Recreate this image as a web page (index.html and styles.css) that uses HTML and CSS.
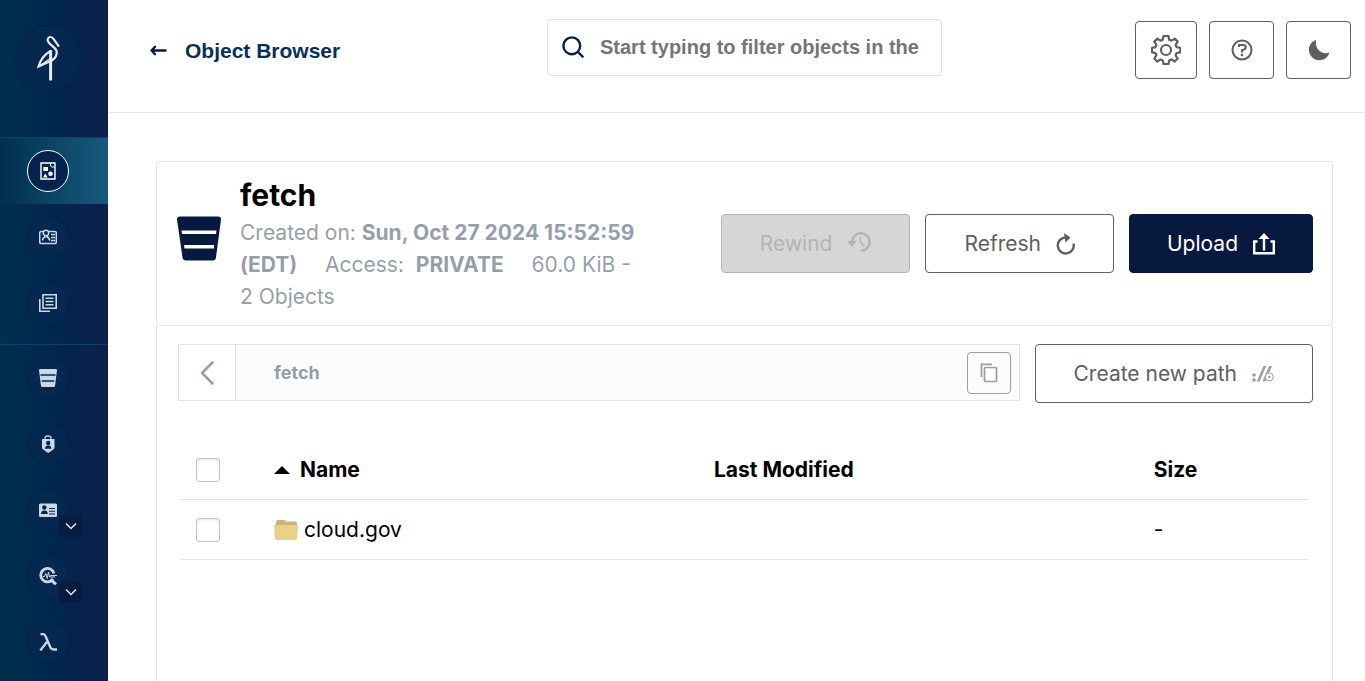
FILE: index.html
```html
<!DOCTYPE html>
<html lang="en">
<head>
<meta charset="utf-8">
<meta name="viewport" content="width=device-width, initial-scale=1">
<title>Object Browser</title>
<link rel="stylesheet" href="styles.css">
</head>
<body>
<div class="app">
  <nav class="sidebar" aria-label="Main">
    <a class="logo" href="#" aria-label="Home">
      <svg width="24" height="48" viewBox="0 0 24 48" fill="none" stroke="#e8e9ec">
        <path d="M23 12.700L17.500 5C16 2.300 12.500 2.400 11.700 5C11.100 7.300 12.500 8.700 15 10.800C19 14.200 21.300 16 20.700 19.500C20 24 17 26.500 12.500 28L2.500 32.500C4.500 25.500 8.500 20.500 14.500 17" stroke-width="2.200"/>
        <path d="M14.600 16V46.500" stroke-width="3"/>
        <path d="M3.500 32L13.500 25" stroke-width="1.500"/>
      </svg>
    </a>
    <div class="group">
      <a class="item active" href="#" aria-label="Object Browser"><span class="disc">
        <svg width="18" height="18" viewBox="0 0 18 18"><path d="M2 1h14v16H2z" fill="none" stroke="#fff" stroke-width="1.400"/><path d="M4.300 5H9v4H4.300zM4 15.500l2.300-4 2.300 4z" fill="#fff"/><path d="M11.500 1v2q0 2 2 2H16" fill="none" stroke="#fff"/><circle cx="11.500" cy="11.800" r="2.300" fill="#fff"/></svg></span></a>
      <a class="item" href="#" aria-label="Access Keys"><span class="disc">
        <svg width="18" height="18" viewBox="0 0 18 18" fill="none" stroke="#c8d8e8" stroke-width="1.500"><path d="M4 3.500H2Q.7 3.500.7 5v9Q.7 15.500 2 15.500h14q1.300 0 1.300-1.500V5q0-1.500-1.300-1.500h-6"/><circle cx="7" cy="5" r="2.700"/><path d="M3.300 12.500Q4 9.500 6 9V7.500M8 7.500V9q2.200.5 2.700 3.500zM12 6.500h4M12 9.500h4M12 12.500h4"/></svg></span></a>
      <a class="item" href="#" aria-label="Documentation"><span class="disc">
        <svg width="18" height="18" viewBox="0 0 18 18" fill="none" stroke="#c8d8e8" stroke-width="1.600"><path d="M4 .8h13.200v13.400H4zM.8 5v12.200H11M6.500 4.200h8M6.500 7.500h8M6.500 10.800h8"/></svg></span></a>
    </div>
    <div class="group">
      <a class="item" href="#" aria-label="Buckets"><span class="disc">
        <svg width="18" height="18" viewBox="0 0 18 18"><path d="M1 0h16q1 0 1 1l-2 16q-.2 1-1.200 1H3.200q-1 0-1.200-1L0 1Q0 0 1 0z" fill="#c8d8e8"/><path d="M1.500 6h15M2.800 12h12.400" stroke="#04254d" stroke-width="1.300"/></svg></span></a>
      <a class="item" href="#" aria-label="Policies"><span class="disc">
        <svg width="18" height="18" viewBox="0 0 18 18"><path d="M6 4V3q0-2 3-2t3 2v1" fill="none" stroke="#c8d8e8" stroke-width="1.300"/><path d="M3 4h12.500v9q0 1-6.300 5Q3 14 3 13z" fill="#c8d8e8"/><circle cx="9.200" cy="8" r="2.200" fill="#04254d"/><path d="M6 13.800v-.8q.5-2.200 2.300-2.500h1.800q1.800.3 2.300 2.500v.8z" fill="#04254d"/></svg></span></a>
      <div class="item"><a href="#" class="disc" aria-label="Identity">
        <svg width="18" height="18" viewBox="0 0 18 18"><rect y="2.500" width="18" height="13.500" rx="1.500" fill="#c8d8e8"/><circle cx="5.300" cy="6.500" r="2.200" fill="#04254d"/><path d="M2 13v-1q.6-2.200 2.500-2.500h1.800q1.800.3 2.400 2.500v1z" fill="#04254d"/><path d="M10 7.500h6M10 10.300h6M10 13h6" stroke="#04254d" stroke-width="1.100"/></svg></a>
        <button class="expand" type="button" aria-label="Expand Identity"><svg width="12" height="8" viewBox="0 0 12 8"><path d="M1 1.500l5 5 5-5" fill="none" stroke="#e4ebf2" stroke-width="1.400"/></svg></button></div>
      <div class="item"><a href="#" class="disc" aria-label="Monitoring">
        <svg width="18" height="18" viewBox="0 0 18 18" fill="none" stroke="#c8d8e8"><path d="M15 6.500A6.700 6.700 0 1 0 14 12" stroke-width="2.800"/><path d="M11.500 12.500l5.500 4.800" stroke-width="3"/><path d="M4 9.500h1.500l1.300-3 1.400 5L9.500 5l1 5 1-1.500H18M11 10h5" stroke-width="1"/></svg></a>
        <button class="expand" type="button" aria-label="Expand Monitoring"><svg width="12" height="8" viewBox="0 0 12 8"><path d="M1 1.500l5 5 5-5" fill="none" stroke="#e4ebf2" stroke-width="1.400"/></svg></button></div>
      <a class="item" href="#" aria-label="Events"><span class="disc">
        <svg width="18" height="18" viewBox="0 0 18 18" fill="none" stroke="#c8d8e8" stroke-width="2.300"><path d="M1.500 1.200h2.500q1.800 0 2.600 2l4.700 11q.9 2.300 3.200 2.300H18M9 7.500L1.300 17.500"/></svg></span></a>
    </div>
  </nav>

  <div class="page">
    <header class="topbar">
      <a class="back" href="#">
        <svg width="17" height="12" viewBox="0 0 17 12" fill="none" stroke="#081c42" stroke-width="2.400" stroke-linecap="round" stroke-linejoin="round"><path d="M15.500 5.500H2M5 1.800L1.500 5.500l3.500 3.700"/></svg>
        <span>Object Browser</span>
      </a>
      <label class="search">
        <svg width="22" height="22" viewBox="0 0 22 22" fill="none" stroke="#081c42" stroke-width="2.400" stroke-linecap="round"><circle cx="9.800" cy="9.800" r="8.400"/><path d="M16 16l4.600 4.600"/></svg>
        <input type="text" aria-label="Filter objects" placeholder="Start typing to filter objects in the">
      </label>
      <div class="tools">
        <button class="btn tool gear" type="button" aria-label="Settings">
          <svg width="30" height="30" viewBox="0 0 30 30" fill="none" stroke="#5e5f5f" stroke-width="2.200" stroke-linejoin="round"><circle cx="15" cy="15" r="5"/><path d="M12.500 1h5l.7 3.700 2.300 1 3.200-2.100 3 3-2.100 3.200 1 2.300 3.700.7v4.500l-3.700.7-1 2.300 2.100 3.200-3 3-3.200-2.100-2.300 1-.7 3.700h-5l-.7-3.700-2.300-1-3.200 2.100-3-3 2.100-3.200-1-2.300L1 17.300v-4.500l3.400-.7 1-2.300-2.100-3.200 3-3 3.200 2.100 2.300-1z"/></svg></button>
        <button class="btn tool" type="button" aria-label="Help">
          <svg width="22" height="22" viewBox="0 0 22 22" fill="none" stroke="#5e5f5f" stroke-width="2"><circle cx="11" cy="11" r="9.500"/><path d="M8 8V6h4.200q2.500 0 2.500 2.300T11 11.200V13.500"/><path d="M9.800 16h2.400" stroke-width="2.400"/></svg></button>
        <button class="btn tool" type="button" aria-label="Dark mode">
          <svg width="22" height="22" viewBox="0 0 22 22" fill="#5e5f5f"><path d="M8 .8A10.500 10.500 0 1 0 21.500 13.500Q15 15.500 11 11.500T8 .8z"/></svg></button>
      </div>
    </header>

    <main class="content">
      <section class="summary">
        <svg class="bucket" width="44" height="46" viewBox="0 0 44 46"><path d="M3 .5h38q3 0 3 3l-5 38q-.5 3-3 3H9q-3 0-3.500-3L0 3.500Q0 .5 3 .5z" fill="#07193e"/><path d="M4.500 14.500h35L39 18H5zM7 29h30v3.500H7.500z" fill="#fff"/></svg>
        <div class="details">
          <h1>fetch</h1>
          <p><span class="fact">Created on: <b>Sun, Oct 27 2024 15:52:59 (EDT)</b></span> <span class="fact">Access:&nbsp; <b>PRIVATE</b></span> <span>60.0 KiB - 2&nbsp;Objects</span></p>
        </div>
        <div class="actions">
          <button class="btn" type="button" disabled>Rewind
            <svg width="24" height="26" viewBox="0 0 24 26" fill="none" stroke="currentColor"><path d="M5 11A8.800 8.800 0 1 1 14 19.800" stroke-width="2.500"/><path d="M0 10h9.500L5 16z" fill="currentColor" stroke="none"/><path d="M13.500 6v5l3.500 4.500" stroke-width="1.500"/></svg></button>
          <button class="btn" type="button">Refresh
            <svg width="19" height="22" viewBox="0 0 19 22" fill="none" stroke="currentColor" stroke-width="2.400"><path d="M10 4.500A8 8 0 1 0 17.500 10.500"/><path d="M8 0l6.500 4.500L9.500 9.500z" fill="currentColor" stroke="none"/></svg></button>
          <button class="btn primary" type="button">Upload
            <svg width="22" height="22" viewBox="0 0 22 22" fill="none" stroke="currentColor" stroke-width="2.400"><path d="M4.500 8.500H1.200V20.300H20.800V8.500H17.500M11 17.500V4"/><path d="M5.500 6L11 0l5.500 6z" fill="currentColor" stroke="none"/></svg></button>
        </div>
      </section>

      <section class="browser">
        <div class="pathrow">
          <div class="crumbs">
            <button class="up" type="button" aria-label="Back"><svg width="14" height="24" viewBox="0 0 14 24"><path d="M12.500 1.500L2 12l10.500 10.500" fill="none" stroke="#969fa8" stroke-width="2.500" stroke-linecap="round" stroke-linejoin="round"/></svg></button>
            <div class="trail"><a href="#">fetch</a>
              <button class="copy" type="button" aria-label="Copy path"><svg width="18" height="20" viewBox="0 0 18 20" fill="none" stroke="#969fa8" stroke-width="1.700"><path d="M1.500 14V1.300H12"/><rect x="4.500" y="4.500" width="12" height="14" rx="1"/></svg></button></div>
          </div>
          <button class="btn create" type="button">Create new path
            <svg width="22" height="16" viewBox="0 0 22 16"><g fill="#969fa8"><circle cx="2" cy="9" r="1.800"/><circle cx="2" cy="14" r="1.800"/><path d="M11.500 0h2.800L7.500 15.500H4.700zM17.200 0H20l-6.800 15.500h-2.800z"/></g><circle cx="17.300" cy="11" r="4" fill="#fff" stroke="#969fa8"/><circle cx="17.300" cy="11" r="1.200" fill="#969fa8"/></svg></button>
        </div>
        <table>
          <colgroup><col class="c-check"><col class="c-wide"><col class="c-wide"><col></colgroup>
          <thead><tr>
            <th><input type="checkbox" aria-label="Select all"></th>
            <th><span class="cell sort"><svg width="16" height="8" viewBox="0 0 16 8"><path d="M0 8l8-8 8 8z"/></svg>Name</span></th>
            <th>Last Modified</th><th>Size</th>
          </tr></thead>
          <tbody><tr>
            <td><input type="checkbox" aria-label="Select cloud.gov"></td>
            <td><span class="cell"><svg width="24" height="20" viewBox="0 0 24 20"><path d="M2 3q0-3 2-3h6q1.500 0 2 1.500h9q2 0 2 2V6H1z" fill="#cdb57a"/><path d="M0 5h24l-.8 13q-.2 2-2 2H3q-2 0-2.200-2z" fill="#e7d288"/></svg>cloud.gov</span></td>
            <td></td><td>-</td>
          </tr></tbody>
        </table>
      </section>
    </main>
  </div>
</div>
</body>
</html>
```
FILE: styles.css
```css
* { box-sizing: border-box; }

body {
  margin: 0;
  background: #fff;
  color: #000;
  font: 21px/32px Inter, sans-serif;
}

a { color: inherit; text-decoration: none; }
button, input { font: inherit; margin: 0; }
button { cursor: pointer; }
svg { display: block; flex: none; }

.app { display: flex; height: 100vh; overflow: hidden; }

.sidebar {
  flex: none;
  width: 108px;
  overflow: hidden;
  background: linear-gradient(90deg, #00304e 0%, #00274e 50%, #0c204a 100%);
}

.logo {
  display: flex;
  align-items: center;
  justify-content: center;
  width: 66px;
  height: 66px;
  margin: 25px 15px 46px;
  border: 1px solid #04224a;
  border-radius: 50%;
  background: #05284e;
}

.group { border-top: 1px solid #0b426d; padding-bottom: 8px; }

.item {
  position: relative;
  display: flex;
  align-items: center;
  height: 66px;
  padding-left: 27px;
}

.item.active { background: linear-gradient(90deg, #00304e 0%, #0c4566 50%, #165a7d 100%); }

.disc {
  display: flex;
  align-items: center;
  justify-content: center;
  width: 42px;
  height: 42px;
  border: 1px solid #04224a;
  border-radius: 50%;
  background: #05284e;
}

.active .disc { border-color: #fff; background: #05244c; }

.expand {
  position: absolute;
  left: 59px;
  bottom: 6px;
  display: grid;
  place-items: center;
  width: 23px;
  height: 22px;
  padding: 0;
  border: 0;
  border-radius: 2px;
  background: #081c42;
}

.page { flex: 1; min-width: 0; display: flex; flex-direction: column; }

.topbar {
  flex: none;
  display: flex;
  align-items: flex-start;
  height: 113px;
  padding: 19px 14px 0 42px;
  border-bottom: 1px solid #e2e2e2;
}

.back {
  flex: 1;
  display: flex;
  align-items: center;
  gap: 18px;
  height: 64px;
  color: #073052;
  font: bold 21px/24px "Liberation Sans", Arial, sans-serif;
}

.search {
  flex: none;
  width: 395px;
  display: flex;
  align-items: center;
  gap: 15px;
  height: 57px;
  padding: 0 14px 2px;
  border: 1px solid #e2e2e2;
  border-radius: 4px;
}

.search input {
  flex: 1;
  min-width: 0;
  padding: 0 1px;
  border: 0;
  outline: 0;
  background: none;
  color: #081c42;
  font: bold 20px/24px "Liberation Sans", Arial, sans-serif;
}

.search input::placeholder { color: #757575; opacity: 1; }

.tools {
  flex: 1;
  display: flex;
  justify-content: flex-end;
  gap: 12px;
  padding: 2px 0 0 12px;
}

.btn {
  display: flex;
  align-items: center;
  justify-content: center;
  gap: 15px;
  height: 59px;
  padding: 0 38px;
  border: 1px solid #5e5f5f;
  border-radius: 4px;
  background: #fff;
  color: #5e5f5f;
  white-space: nowrap;
}

.btn.tool { width: 65px; height: 58px; padding: 0; }
.btn.gear { width: 62px; }
.btn:disabled { border-color: #b4b4b4; background: #d5d7d7; color: #b4b4b4; cursor: default; }
.btn.primary { padding: 0 37px; border-color: #07193e; background: #07193e; color: #fff; }

.content {
  flex: 1;
  min-height: 0;
  display: flex;
  flex-direction: column;
  padding: 48px 32px 0 48px;
}

.summary {
  flex: none;
  display: flex;
  align-items: center;
  padding: 12px 19px 12px 20px;
  border: 1px solid #e2e2e2;
  border-radius: 3px;
}

.bucket { margin-bottom: 10px; }

.details { flex: 1; min-width: 0; padding: 0 76px 0 19px; }
.details h1 { margin: 0; font-size: 30px; line-height: 43px; font-weight: 700; }
.details p { margin: 0; color: #969fa8; }
.fact { margin-right: 22px; }

.actions { display: flex; gap: 15px; }

.browser {
  flex: 1;
  padding: 18px 19px 0 21px;
  border: 1px solid #e2e2e2;
  border-width: 0 1px;
}

.pathrow { display: flex; align-items: flex-start; gap: 15px; }
.crumbs { flex: 1; display: flex; height: 57px; border: 1px solid #e2e2e2; }

.up {
  display: grid;
  place-items: center;
  width: 57px;
  padding: 0;
  border: 0;
  border-right: 1px solid #e2e2e2;
  background: #fff;
}

.trail {
  flex: 1;
  display: flex;
  align-items: center;
  justify-content: space-between;
  padding: 0 8px 0 38px;
  background: #fcfcfc;
  color: #969fa8;
  font-size: 18px;
  font-weight: 700;
}

.copy {
  display: grid;
  place-items: center;
  width: 44px;
  height: 42px;
  padding: 0;
  border: 1px solid #969fa8;
  border-radius: 4px;
  background: none;
}

table {
  width: calc(100% - 7px);
  margin: 37px 3px 0;
  border-collapse: separate;
  border-spacing: 0;
  table-layout: fixed;
}

.c-check { width: 93px; }
.c-wide { width: 39%; }
th, td { height: 60px; padding: 0; border-bottom: 1px solid #e2e2e2; text-align: left; }
th { font-weight: 700; }
.cell { display: flex; align-items: center; gap: 6px; }
.sort { gap: 10px; }

input[type="checkbox"] {
  appearance: none;
  display: block;
  width: 24px;
  height: 24px;
  margin-left: 15px;
  border: 1px solid #c3c3c3;
  border-radius: 3px;
  background: #fff;
  box-shadow: inset 0 1px 3px rgba(0, 0, 0, 0.1);
}

input[type="checkbox"]:checked { background: #07193e; }
```
